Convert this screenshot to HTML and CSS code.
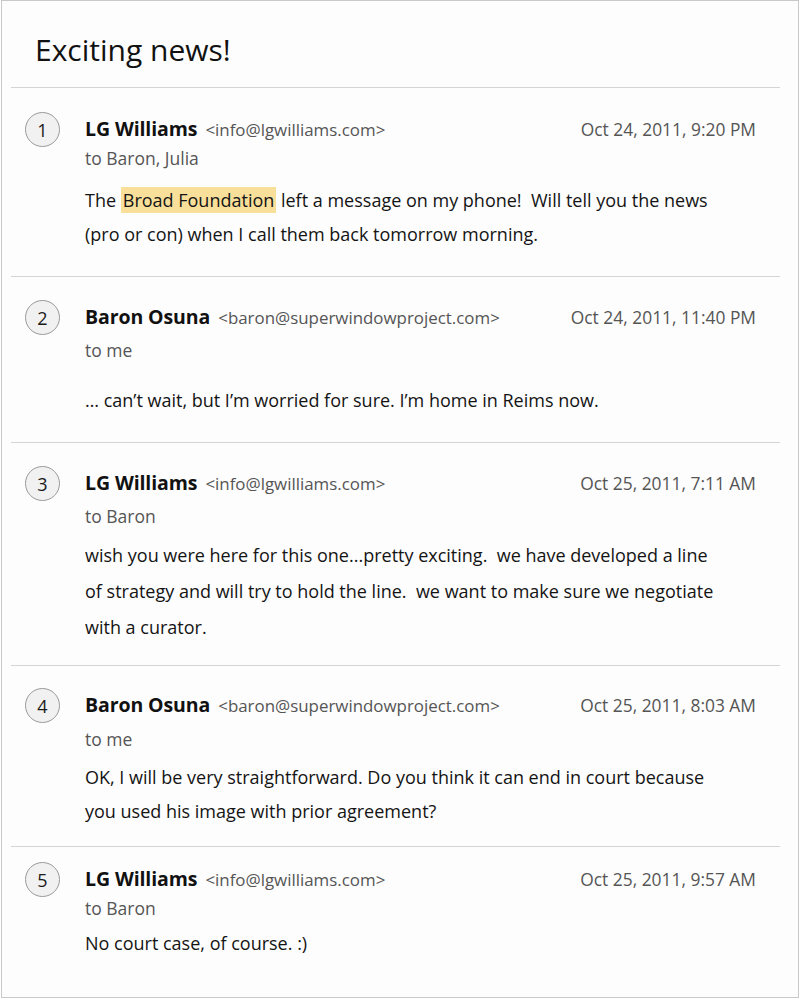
FILE: index.html
```html
<!DOCTYPE html>
<html lang="en">
<head>
<meta charset="utf-8">
<title>Exciting news!</title>
<link rel="stylesheet" href="styles.css">
</head>
<body>
<div class="frame">
  <h1 class="title">Exciting news!</h1>
  <div class="thread">
    <div class="msg">
      <div class="num">1</div>
      <div class="content">
        <div class="head">
          <span class="name">LG Williams</span>
          <span class="email">&lt;info@lgwilliams.com&gt;</span>
          <span class="date">Oct 24, 2011, 9:20 PM</span>
        </div>
        <div class="to">to Baron, Julia</div>
        <div class="body">The <span class="hl">Broad Foundation</span> left a message on my phone!&nbsp; Will tell you the news<br>(pro or con) when I call them back tomorrow morning.</div>
      </div>
    </div>
    <div class="msg">
      <div class="num">2</div>
      <div class="content">
        <div class="head">
          <span class="name">Baron Osuna</span>
          <span class="email">&lt;baron@superwindowproject.com&gt;</span>
          <span class="date">Oct 24, 2011, 11:40 PM</span>
        </div>
        <div class="to">to me</div>
        <div class="body">… can’t wait, but I’m worried for sure. I’m home in Reims now.</div>
      </div>
    </div>
    <div class="msg">
      <div class="num">3</div>
      <div class="content">
        <div class="head">
          <span class="name">LG Williams</span>
          <span class="email">&lt;info@lgwilliams.com&gt;</span>
          <span class="date">Oct 25, 2011, 7:11 AM</span>
        </div>
        <div class="to">to Baron</div>
        <div class="body">wish you were here for this one...pretty exciting.&nbsp; we have developed a line<br>of strategy and will try to hold the line.&nbsp; we want to make sure we negotiate<br>with a curator.</div>
      </div>
    </div>
    <div class="msg">
      <div class="num">4</div>
      <div class="content">
        <div class="head">
          <span class="name">Baron Osuna</span>
          <span class="email">&lt;baron@superwindowproject.com&gt;</span>
          <span class="date">Oct 25, 2011, 8:03 AM</span>
        </div>
        <div class="to">to me</div>
        <div class="body">OK, I will be very straightforward. Do you think it can end in court because<br>you used his image with prior agreement?</div>
      </div>
    </div>
    <div class="msg">
      <div class="num">5</div>
      <div class="content">
        <div class="head">
          <span class="name">LG Williams</span>
          <span class="email">&lt;info@lgwilliams.com&gt;</span>
          <span class="date">Oct 25, 2011, 9:57 AM</span>
        </div>
        <div class="to">to Baron</div>
        <div class="body">No court case, of course. :)</div>
      </div>
    </div>
  </div>
</div>
</body>
</html>
```
FILE: styles.css
```css
html, body {
  margin: 0;
  padding: 0;
  background: #ffffff;
}
body {
  font-family: "Open Sans", "Noto Sans", sans-serif;
  color: #141414;
}
.frame {
  box-sizing: border-box;
  width: 798px;
  height: 998px;
  margin-left: 1px;
  border: 1px solid #c9c9c9;
  background: #fdfdfd;
  overflow: hidden;
}
.title {
  margin: 0;
  padding: 31px 0 0 33px;
  height: 55px;
  font-size: 30px;
  line-height: 36px;
  font-weight: 400;
  color: #111;
}
.thread {
  margin: 0 18px 0 9px;
}
.msg {
  display: flex;
  border-top: 1px solid #d4d4d4;
  padding: 26px 24px 22px 14px;
}
.num {
  box-sizing: border-box;
  flex: none;
  width: 35px;
  height: 35px;
  margin-top: -3px;
  margin-right: 25px;
  border: 1px solid #9a9a9a;
  border-radius: 50%;
  background: #f1f1f1;
  display: flex;
  align-items: center;
  justify-content: center;
  font-size: 18px;
  color: #1a1a1a;
}
.content {
  flex: 1;
}
.head {
  display: flex;
  align-items: baseline;
  height: 28px;
  line-height: 28px;
}
.name {
  font-size: 19.5px;
  font-weight: 700;
  color: #111;
  margin-right: 8px;
  letter-spacing: -0.1px;
}
.email {
  font-size: 16.9px;
  color: #555;
}
.date {
  margin-left: auto;
  font-size: 17.4px;
  color: #555;
}
.to {
  font-size: 17.5px;
  line-height: 24px;
  color: #555;
  margin-top: 6px;
}
.body {
  font-size: 18px;
  line-height: 34px;
  margin-top: 12px;
  color: #141414;
}
.hl {
  background: #f8df9a;
  padding: 1px 2px;
}
.msg:nth-child(1) { padding-top: 27px; padding-bottom: 25px; }
.msg:nth-child(1) .to { margin-top: 3px; }
.msg:nth-child(1) .body { margin-top: 13px; }
.msg:nth-child(2) { padding-bottom: 25px; }
.msg:nth-child(2) .to { margin-top: 7px; }
.msg:nth-child(2) .body { margin-top: 21px; }
.msg:nth-child(3) { padding-bottom: 20px; }
.msg:nth-child(3) .to { margin-top: 7px; }
.msg:nth-child(3) .body { margin-top: 9px; line-height: 36px; }
.msg:nth-child(4) { padding-top: 25px; padding-bottom: 18px; }
.msg:nth-child(4) .to { margin-top: 8px; }
.msg:nth-child(4) .body { margin-top: 9px; }
.msg:nth-child(5) { padding-top: 18px; }
.msg:nth-child(5) .to { margin-top: 3px; }
.msg:nth-child(5) .body { margin-top: 6px; }
```
